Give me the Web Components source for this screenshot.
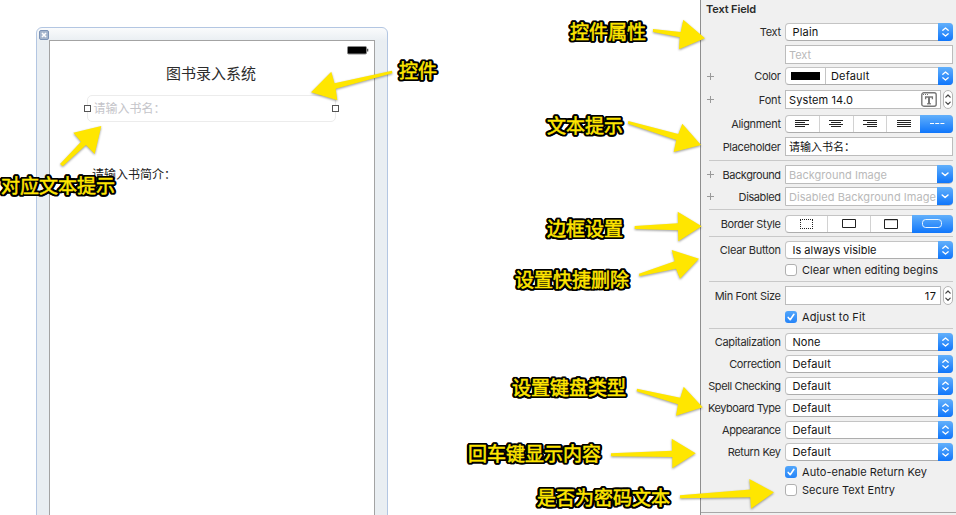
<!DOCTYPE html>
<html lang="zh">
<head>
<meta charset="utf-8">
<title>Text Field</title>
<style>
html, body { margin: 0; height: 515px; overflow: hidden; background: #fff; }
body { font-family: Inter, "Noto Sans CJK SC", sans-serif; }
</style>
</head>
<body>
<app-shell></app-shell>
<script>
const define = (name, html, setup) => {
  const tpl = document.createElement('template');
  tpl.innerHTML = html;
  customElements.define(name, class extends HTMLElement {
    connectedCallback() {
      if (this.shadowRoot) return;
      const root = this.attachShadow({ mode: 'open' });
      root.append(tpl.content.cloneNode(true));
      if (setup) setup(this, root);
    }
  });
};

// Text run tracked out or in to a given width.
define('fit-text', `<style>:host{display:inline-block;white-space:nowrap;line-height:14px}span{display:inline-block}</style><span></span>`,
  (el, root) => {
    const s = root.querySelector('span'), t = el.getAttribute('text'), w = +el.getAttribute('w');
    s.textContent = t;
    if (w) {
      const ls = (w + 1 - s.getBoundingClientRect().width) / t.length;
      s.style.letterSpacing = ls + 'px';
      s.style.marginRight = -ls + 'px';
    }
  });

define('pop-up', `<style>
:host{display:flex;box-sizing:border-box;width:168px;height:18px;border:1px solid #c4c4c4;border-bottom-color:#adadad;border-radius:4px;background:#fff;position:relative;color:#111}
.v{flex:1;padding-left:6.5px;display:flex;align-items:center}
.b{width:15px;margin:-1px -1px -1px 0;border-radius:0 4px 4px 0;background:linear-gradient(#62b0fb,#0f76fb);display:flex}
</style><div class="v"><slot></slot></div><div class="b"><svg width="15" height="18" fill="none" stroke="#fff" stroke-width="1.3" stroke-linecap="round" stroke-linejoin="round"><path d="M4.8 7.3 7.5 5l2.7 2.3M4.8 10.8l2.7 2.3 2.7-2.3"/></svg></div>`);

define('text-box', `<style>
:host{display:flex;box-sizing:border-box;height:19px;width:168px;border:1px solid #bcbcbc;background:#fff;padding:0 3px 0 3px;align-items:center;color:#111}
:host([ghost]){color:#b9b9b9}
:host([short]){width:156px}
:host([end]){justify-content:flex-end;padding-right:4px}
</style><slot></slot>`);

define('combo-box', `<style>
:host{display:flex;box-sizing:border-box;height:19px;width:168px;border:1px solid #bcbcbc;border-radius:0 4px 4px 0;background:#fff;color:#b9b9b9}
.v{flex:1;padding-left:3px;display:flex;align-items:center}
.b{width:16px;margin:-1px -1px 0 0;height:18px;border-radius:0 4px 4px 0;background:linear-gradient(#62b0fb,#0f76fb)}
</style><div class="v"><slot></slot></div><div class="b"><svg width="16" height="18" fill="none" stroke="#fff" stroke-width="1.5" stroke-linecap="round" stroke-linejoin="round"><path d="M5.2 8 8.1 10.5l2.9-2.5"/></svg></div>`);

define('num-stepper', `<style>
:host{display:block;box-sizing:border-box;width:10px;height:19px;border:1px solid #b5b5b5;border-radius:5px;background:#fff;margin-left:2px}
svg{display:block}
</style><svg width="8" height="17" fill="none" stroke="#444" stroke-width="1.2" stroke-linecap="round" stroke-linejoin="round"><path d="M1.8 6.2 4 4l2.2 2.2M1.8 11.2 4 13.4l2.2-2.2"/></svg>`);

define('seg-control', `<style>
:host{display:flex;box-sizing:border-box;width:168px;height:18px;border:1px solid #c4c4c4;border-bottom-color:#adadad;border-radius:4px;background:#fff}
div{flex:1;display:flex;justify-content:center;border-right:1px solid #d2d2d2;height:16px}
div:last-child{border:0;margin:-1px;height:18px;border-radius:0 4px 4px 0;background:linear-gradient(#62b0fb,#0f76fb)}
div:last-child svg{margin-top:1px}
svg{display:block;width:22px;height:16px;fill:none;stroke:#222}
</style>`, (el, root) => {
  const sets = {
    align: ['M4 4.5h14M4 6.5h10M4 8.5h14M4 10.5h10', 'M4 4.5h14M6 6.5h10M4 8.5h14M6 10.5h10', 'M4 4.5h14M8 6.5h10M4 8.5h14M8 10.5h10', 'M4 4.5h14M4 6.5h14M4 8.5h14M4 10.5h14', 'M4 7.5h4M9.2 7.5h4M14.4 7.5h4'].map((d, i) => `<path d="${d}"${i == 4 ? ' stroke="#fff"' : ''}/>`),
    border: ['<path shape-rendering="crispEdges" d="M4 3.5h13M4 12.5h13M4.5 4v9M16.5 4v9" stroke-dasharray="1 1"/>', '<path d="M4.5 3.5h13v8h-13z"/>', '<path d="M4.5 3.5h13v9h-13z"/><path d="M5 4.5h12" stroke="#ccc"/>', '<rect x="1.5" y="3.5" width="19" height="8" rx="3.2" stroke="#e8f4ff"/>']
  };
  for (const g of sets[el.getAttribute('kind')]) {
    const d = document.createElement('div');
    d.innerHTML = `<svg viewBox="0 0 22 16">${g}</svg>`;
    root.append(d);
  }
});

define('check-box', `<style>
:host{display:flex;height:12px;align-items:center;gap:5px;color:#1c1c1c}
i{box-sizing:border-box;width:12px;height:12px;border:1px solid #b0b0b0;border-radius:3px;background:#fff;display:block}
svg{display:none}
:host([on]) i{border:0;background:linear-gradient(#52a6fb,#2584f8)}
:host([on]) svg{display:block}
</style><i><svg width="12" height="12" fill="none" stroke="#fff" stroke-width="1.6" stroke-linecap="round" stroke-linejoin="round"><path d="M3.2 6.4 5.2 8.7 8.9 3.3"/></svg></i><slot></slot>`);

define('prop-row', `<style>
:host{display:grid;grid-template-columns:14px 61px 168px;align-items:center;padding-left:5px}
.c{display:flex;margin-left:4px;width:168px}
.l{display:flex;justify-content:flex-end;color:#2b2b2b}
svg{display:block}
</style><div class="p"></div><div class="l"></div><div class="c"><slot></slot></div>`, (el, root) => {
  el.style.marginTop = el.getAttribute('gap') + 'px';
  if (el.hasAttribute('plus')) root.querySelector('.p').innerHTML = '<svg width="9" height="9" stroke="#9a9a9a"><path d="M1 4.5h7M4.5 1v7"/></svg>';
  if (el.hasAttribute('label')) root.querySelector('.l').innerHTML = `<fit-text text="${el.getAttribute('label')}" w="${el.getAttribute('w')}"></fit-text>`;
});

define('rule-line', `<style>:host{display:block;height:1px;background:#c9c9c9;margin:0 0 0 8px}</style>`, el => { el.style.marginTop = el.getAttribute('gap') + 'px'; });

define('inspector-panel', `<style>
:host{display:block;box-sizing:border-box;width:256px;height:515px;overflow:hidden;border-left:1px solid #8f8f8f;background:#f0f0f0;font-size:11px;padding-right:3px}
.t{font-weight:600;color:#2b2b2b;height:14px;padding:2px 0 0 5px;display:flex}
.s{width:29px;height:8px;background:#000;margin-left:-1.5px}
.d{width:1px;height:16px;background:#c4c4c4;margin:0 5px 0 5px}
.f{margin-left:auto;display:block}
.end{height:1px;background:#a8a8a8;margin:16px -3px 0 0}
</style>
<div class="t"><fit-text text="Text Field" w="49"></fit-text></div>
<prop-row gap="7" label="Text" w="20"><pop-up><fit-text text="Plain" w="25"></fit-text></pop-up></prop-row>
<prop-row gap="4"><text-box ghost><fit-text text="Text" w="21"></fit-text></text-box></prop-row>
<prop-row gap="3" plus label="Color" w="25.5"><pop-up><div class="s"></div><div class="d"></div><fit-text text="Default" w="37.5"></fit-text></pop-up></prop-row>
<prop-row gap="5" plus label="Font" w="21"><text-box short><fit-text text="System 14.0" w="63"></fit-text><svg class="f" width="16" height="15" fill="none" stroke="#777"><rect x=".8" y=".8" width="14.4" height="13.4" rx="2" stroke-width="1.4"/><path d="M2 2.5h5" stroke-dasharray="1 1"/><path d="M4.6 7.2V5h6.8v2.2" stroke-width="1.3"/><path d="M8 5v7" stroke-width="2"/><path d="M6 11.8h4" stroke-width="1.2"/></svg></text-box><num-stepper></num-stepper></prop-row>
<prop-row gap="6" label="Alignment" w="48.5"><seg-control kind="align"></seg-control></prop-row>
<prop-row gap="4" label="Placeholder" w="57"><text-box><fit-text text="请输入书名："></fit-text></text-box></prop-row>
<rule-line gap="4"></rule-line>
<prop-row gap="4" plus label="Background" w="57"><combo-box><fit-text text="Background Image" w="97"></fit-text></combo-box></prop-row>
<prop-row gap="3" plus label="Disabled" w="41"><combo-box><fit-text text="Disabled Background Image" w="146"></fit-text></combo-box></prop-row>
<rule-line gap="3"></rule-line>
<prop-row gap="5" label="Border Style" w="59"><seg-control kind="border"></seg-control></prop-row>
<rule-line gap="3"></rule-line>
<prop-row gap="4" label="Clear Button" w="60"><pop-up><fit-text text="Is always visible" w="83"></fit-text></pop-up></prop-row>
<prop-row gap="5"><check-box><fit-text text="Clear when editing begins" w="135"></fit-text></check-box></prop-row>
<rule-line gap="5"></rule-line>
<prop-row gap="4" label="Min Font Size" w="65"><text-box short end><fit-text text="17" w="11"></fit-text></text-box><num-stepper></num-stepper></prop-row>
<prop-row gap="6"><check-box on><fit-text text="Adjust to Fit" w="62.5"></fit-text></check-box></prop-row>
<rule-line gap="5"></rule-line>
<prop-row gap="4" label="Capitalization" w="65"><pop-up><fit-text text="None" w="27"></fit-text></pop-up></prop-row>
<prop-row gap="4" label="Correction" w="50.5"><pop-up><fit-text text="Default" w="37.5"></fit-text></pop-up></prop-row>
<prop-row gap="4" label="Spell Checking" w="71.5"><pop-up><fit-text text="Default" w="37.5"></fit-text></pop-up></prop-row>
<prop-row gap="4" label="Keyboard Type" w="71.5"><pop-up><fit-text text="Default" w="37.5"></fit-text></pop-up></prop-row>
<prop-row gap="4" label="Appearance" w="57.5"><pop-up><fit-text text="Default" w="37.5"></fit-text></pop-up></prop-row>
<prop-row gap="4" label="Return Key" w="52"><pop-up><fit-text text="Default" w="37.5"></fit-text></pop-up></prop-row>
<prop-row gap="5"><check-box on><fit-text text="Auto-enable Return Key" w="124"></fit-text></check-box></prop-row>
<prop-row gap="6"><check-box><fit-text text="Secure Text Entry" w="92"></fit-text></check-box></prop-row>
<div class="end"></div>`);

// Storyboard scene; view items are laid on it freely.
define('scene-frame', `<style>
:host{display:block;box-sizing:border-box;width:352px;height:500px;margin:27px 0 0 36px;border:1px solid #b3c6e2;border-radius:6px 6px 0 0;background:linear-gradient(#fafbfc,#e9eef2 13px);padding:12px 12px 0;font-family:"Noto Sans CJK SC",sans-serif;position:relative}
.x{position:absolute;left:2px;top:2px;width:10px;height:10px}
.screen{box-sizing:border-box;width:326px;height:500px;border:1px solid #a3a3a3;background:#fff;position:relative}
.bat{position:absolute;right:5px;top:5px}
.title{position:absolute;left:116px;top:21px;font-size:15px;line-height:22px;color:#2c2c2c;white-space:nowrap}
.field{position:absolute;box-sizing:border-box;left:37px;top:54px;width:249px;height:27px;border:1px solid #ececec;border-radius:5px;padding-left:5.5px;font-size:12px;line-height:23px;color:#c4c4c9}
.field i{position:absolute;box-sizing:border-box;width:7px;height:7px;top:9px;border:1px solid #555;background:#fff}
.lab{position:absolute;left:42px;top:123px;font-size:12px;line-height:20px;color:#222;white-space:nowrap}
</style>
<svg class="x" viewBox="0 0 10 10"><rect x=".5" y=".5" width="9" height="9" rx="1.5" fill="#a6b6cd" stroke="#7c93b6"/><path d="M3 3l4 4M7 3L3 7" stroke="#fff" stroke-width="1.6"/></svg>
<div class="screen">
<svg class="bat" width="22" height="9"><rect x=".5" y=".5" width="19" height="7.5" rx="1.2" stroke="#888" fill="#000"/><path d="M20 2.8h1.3v2.8H20z" fill="#555"/></svg>
<div class="title">图书录入系统</div>
<div class="field">请输入书名：<i style="left:-4px"></i><i style="right:-4px"></i></div>
<div class="lab">请输入书简介：</div>
</div>`);

const ring = r => Array.from({ length: 20 }, (_, i) => `${(r * Math.cos(i * Math.PI / 10)).toFixed(2)}px ${(r * Math.sin(i * Math.PI / 10)).toFixed(2)}px 0 #000`).join();
define('call-out', `<style>:host{position:absolute;font:400 19px/26px "Noto Sans CJK SC",sans-serif;color:#ffe600;-webkit-text-stroke:.5px #ffe600;text-shadow:${ring(2.4)},${ring(1.2)};white-space:nowrap}</style><slot></slot>`,
  el => { el.style.left = el.getAttribute('x') + 'px'; el.style.top = (el.getAttribute('y') - 14) + 'px'; });

define('arrow-layer', `<style>:host{position:absolute;left:0;top:0}svg{display:block;filter:drop-shadow(0 1px 1px rgba(0,0,0,.4))}</style>
<svg width="956" height="515" fill="#ffe600">
<path d="M392 70.7 334.5 83.3 331.3 71.7 311 92.3 337.3 100.3 335.7 88.7 392.3 73.3z"/>
<path d="M60 164 81 141.7 73.3 132.7 101.3 126 94.7 154 86 145 62.7 166.3z"/>
<path d="M653 29 680.7 32 683.3 19.7 705 38.3 679 49.3 679.7 37.3 653 32z"/>
<path d="M628.3 121 678.3 134 682.3 123.7 701 145 673.7 152 676.3 140 628 123.7z"/>
<path d="M634.7 226 678 223.2 677.7 211.7 701.7 226.3 678.3 241.3 678 230.2 634.7 229z"/>
<path d="M639 273.7 674.7 261.3 671.7 250 699 258.7 680 278.7 676 268.7 639.3 276.3z"/>
<path d="M637 388.7 680.3 397.7 683.7 386.7 702.7 407.3 676 415.7 678 404.3 636.7 391.3z"/>
<path d="M611 453.3 672 450.7 671.7 438.7 695.7 453.3 672.3 468.3 672.3 457 611 456.3z"/>
<path d="M680 495.3 750.3 489.5 749.3 479 774 492.3 751 508.7 750.3 497.3 680 498.3z"/>
</svg>`);

define('app-shell', `<style>:host{display:flex;justify-content:space-between;width:956px;height:515px;overflow:hidden;position:relative;background:#fff}</style>
<scene-frame></scene-frame>
<inspector-panel></inspector-panel>
<arrow-layer></arrow-layer>
<call-out x="1" y="186">对应文本提示</call-out>
<call-out x="399" y="71">控件</call-out>
<call-out x="570" y="32">控件属性</call-out>
<call-out x="547" y="126">文本提示</call-out>
<call-out x="547" y="229">边框设置</call-out>
<call-out x="515" y="280">设置快捷删除</call-out>
<call-out x="512" y="388">设置键盘类型</call-out>
<call-out x="468" y="454">回车键显示内容</call-out>
<call-out x="537" y="498">是否为密码文本</call-out>`);
</script>
</body>
</html>
